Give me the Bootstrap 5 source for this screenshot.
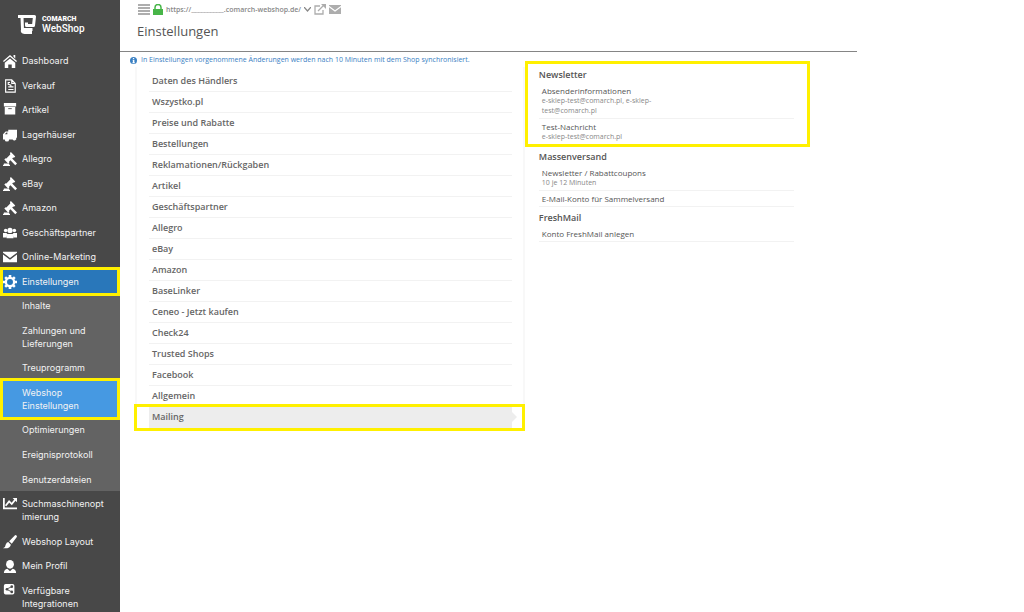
<!DOCTYPE html>
<html lang="de">
<head>
<meta charset="utf-8">
<meta name="viewport" content="width=device-width, initial-scale=1">
<title>Einstellungen – Comarch WebShop</title>
<link href="https://cdn.jsdelivr.net/npm/bootstrap@5.3.0/dist/css/bootstrap.min.css" rel="stylesheet">
<style>
body{font-family:"Open Sans","Noto Sans",sans-serif;font-size:9px;line-height:13px;color:#555;background:#fff}
a{color:inherit;text-decoration:none}
.side{width:120px;background:#484848;color:#f2f2f2;font-family:Inter,"Open Sans",sans-serif}
.brand{height:48px;padding:15px 0 0 18px;gap:5px}
.brand-name{font-family:Roboto,sans-serif;font-weight:500;font-size:10px;line-height:10px;color:#fff}
.brand-name b{display:block;font-size:7px;line-height:9px;font-weight:900}
.entry{position:relative;flex:1 0 auto;padding:6px 12px 5px 22px}
.entry svg{position:absolute;left:3px;top:6px;width:14px;height:14px;fill:#fff}
.entry:last-child.tail{padding-bottom:2px}
.sub{flex:7 0 auto;background:#636363}
.on{background:#2977ba}
.on-sub{background:#4699e2}
.mark-box::after{content:"";position:absolute;inset:-2px 0 -3px;border:3px solid #fff000;z-index:2;pointer-events:none}
.tools{height:18px;padding-left:18px;gap:3px;font-size:7px;font-weight:600;color:#888}
.tools button{padding:0;border:0;background:none;color:#adadad;display:flex}
.tools svg,.info svg{fill:currentColor}
.pagehead{border-bottom:1px solid #858585;width:81.5%}
h1{font-size:13px;line-height:20px;font-weight:400;color:#555;margin:3px 0 10px 17px}
.info{font-size:7px;line-height:14px;color:#3a80c3;padding:1px 0 0 10px;gap:4px}
.panels{display:grid;grid-template-columns:390fr 285fr;width:76.3%;padding-left:15px}
.cats{border-left:2px solid #f8f8f8;border-right:2px solid #f8f8f8;padding:4px 11px 3px 12px}
.cat{display:block;position:relative;height:21px;line-height:20px;padding-left:3px;border-bottom:1px solid #f2f2f2;font-weight:600;color:#666}
.cat.active{background:#ededed;border-color:#ededed}
.cat.active::before{content:"";position:absolute;left:100%;top:5px;border:5px solid transparent;border-left-color:#ededed;border-right:0}
.cat.active::after{content:"";position:absolute;inset:-3px -13px -4px -15px;border:3px solid #fff000}
.group{padding:3px 16px 0 14px}
.group h2{font-size:9px;line-height:13px;font-weight:600;color:#555;margin:0 0 2px}
.news{position:relative;margin-top:-6px;padding-top:7px;padding-bottom:3px}
.news::after{content:"";position:absolute;inset:0;border:3px solid #fff000;pointer-events:none}
.opt{display:block;font-size:8px;line-height:11px;padding:2px 3px;border-bottom:1px solid #f2f2f2}
.opt small{display:block;font-size:7px;line-height:10px;color:#888;max-width:128px}
</style>
</head>
<body>
<svg class="d-none">
<symbol id="hammer" viewBox="0 0 16 16"><path d="M9 0l5 5-1.500 1.500-.8-.3-1.200 1.200 5.500 5.600-2 2-5.500-5.600-1.500 1.500.3.900L6 13.300 1.500 8.500 3 7l.8.300 4.500-4.500L8 1z"/><path d="M1 13h6v1.500h1V16H0v-1.500h1z"/></symbol>
<symbol id="mail" viewBox="0 0 16 14"><path d="M0 1h16v1L8 8 0 2zM0 4l8 6 8-6v9H0z"/></symbol>
</svg>
<div class="d-flex min-vh-100">
<aside class="side d-flex flex-column flex-shrink-0">
<div class="brand d-flex align-items-start">
<svg width="19" height="20" viewBox="0 0 19 20" fill="none" stroke="#fff" stroke-width="3" stroke-linejoin="round"><path d="M0 1.500H16.500L15.500 10.500H8.500V7.500M4 2L4.500 14.500M14.500 14.500H4.500Q3.500 17.500 6.500 17.500H14"/></svg>
<div class="brand-name"><b>COMARCH</b>WebShop</div>
</div>
<nav class="d-flex flex-column flex-grow-1">
<a class="entry" href="#"><svg viewBox="0 0 16 16"><path d="M8 1l8 7-1 1-7-6-7 6-1-1zM12 1h2v4l-2-2zM8 5l6 5v6h-4v-4H6v4H2v-6z"/></svg>Dashboard</a>
<a class="entry" href="#"><svg viewBox="0 0 16 16"><path fill="none" stroke="#fff" stroke-width="1.300" d="M3 1h7l4 4v10H3zM10 1v4h4M6 12h6M9 9h3M8 4H6v2l3 1v2H6"/></svg>Verkauf</a>
<a class="entry" href="#"><svg viewBox="0 0 16 16"><path d="M1 0h14v4H1zM2 4.500h12V13H2z"/><path fill="#484848" d="M6 6h4v1H6z"/></svg>Artikel</a>
<a class="entry" href="#"><svg viewBox="0 0 16 16"><path d="M6 2h10v9h-1a2.200 2.200 0 0 1-4 2H7a2.200 2.200 0 0 1-5 0H0V7l3-3h3zM2 7h3V5H4z" fill-rule="evenodd"/></svg>Lagerhäuser</a>
<a class="entry" href="#"><svg><use href="#hammer"/></svg>Allegro</a>
<a class="entry" href="#"><svg><use href="#hammer"/></svg>eBay</a>
<a class="entry" href="#"><svg><use href="#hammer"/></svg>Amazon</a>
<a class="entry" href="#"><svg viewBox="0 0 16 16"><circle cx="3" cy="5" r="2"/><circle cx="13" cy="5" r="2"/><circle cx="8" cy="5" r="3"/><path d="M0 8h4l1 1-1 4H0zM12 8h4v5h-4l-1-4zM5 9h6l1 5H4z"/></svg>Geschäftspartner</a>
<a class="entry" href="#"><svg><use href="#mail"/></svg>Online-Marketing</a>
<a class="entry on mark-box" href="#"><svg viewBox="0 0 16 16"><circle cx="8" cy="8" r="4.700" fill="none" stroke="#fff" stroke-width="2.600"/><path d="M6.500 0h3v3h-3zM6.500 13h3v3h-3zM0 6.500h3v3H0zM13 6.500h3v3h-3zM1.500 3.500l2-2 2 2-2 2zM10.500 3.500l2-2 2 2-2 2zM1.500 12.500l2-2 2 2-2 2zM10.500 12.500l2-2 2 2-2 2z"/></svg>Einstellungen</a>
<div class="sub d-flex flex-column">
<a class="entry" href="#">Inhalte</a>
<a class="entry" href="#">Zahlungen und<br>Lieferungen</a>
<a class="entry" href="#">Treuprogramm</a>
<a class="entry on-sub mark-box" href="#">Webshop<br>Einstellungen</a>
<a class="entry" href="#">Optimierungen</a>
<a class="entry" href="#">Ereignisprotokoll</a>
<a class="entry" href="#">Benutzerdateien</a>
</div>
<a class="entry" href="#"><svg viewBox="0 0 16 16"><path fill="none" stroke="#fff" stroke-width="2" d="M1 1v12h15M3 10l4-5 3 3 4-5"/><path d="M11 1h5v5z"/></svg>Suchmaschinenopt<br>imierung</a>
<a class="entry" href="#"><svg viewBox="0 0 16 16"><path d="M14 0q2 0 2 2l-6 8-3-3zM6 8l3 3q-1 5-9 4 3-1 3-4 1-3 3-3z"/></svg>Webshop Layout</a>
<a class="entry" href="#"><svg viewBox="0 0 16 16"><ellipse cx="8" cy="6" rx="4.500" ry="5"/><path d="M1 16q0-4 4-5l3 3 3-3q4 1 4 5z"/></svg>Mein Profil</a>
<a class="entry tail" href="#"><svg viewBox="0 0 16 16"><rect x="1" width="12" height="12" rx="2"/><path stroke="#484848" d="M10 3L4 6l6 3" fill="none"/><g fill="#484848"><circle cx="10" cy="3" r="1.500"/><circle cx="4.500" cy="6" r="1.500"/><circle cx="10" cy="9" r="1.500"/></g></svg>Verfügbare<br>Integrationen</a>
</nav>
</aside>
<main class="flex-grow-1">
<header class="pagehead">
<div class="tools d-flex align-items-center">
<button type="button" aria-label="Menü"><svg width="12" height="11" viewBox="0 0 12 11"><path d="M0 0h12v2H0zM0 3h12v2H0zM0 6h12v2H0zM0 9h12v2H0z"/></svg></button>
<svg width="10" height="11" viewBox="0 0 10 11" style="color:#47b548"><path d="M0 5h10v6H0z"/><path d="M2 5V3.500a3 3 0 0 1 6 0V5" fill="none" stroke="currentColor" stroke-width="1.500"/></svg>
<a href="#">https://___________.comarch-webshop.de/</a>
<button type="button" aria-label="Auswahl"><svg width="7" height="5"><path d="M0 0l3.500 4L7 0" fill="none" stroke="#888" stroke-width="1.300"/></svg></button>
<button type="button" aria-label="Shop öffnen"><svg width="12" height="11" viewBox="0 0 12 11"><path d="M6 2H1v8h8V6M4 7l6-6" fill="none" stroke="currentColor" stroke-width="1.300"/><path d="M7 0h5v5z"/></svg></button>
<button type="button" aria-label="Nachricht"><svg width="12" height="11"><use href="#mail"/></svg></button>
</div>
<h1>Einstellungen</h1>
</header>
<div class="info d-flex align-items-center"><svg width="7" height="7" viewBox="0 0 8 8"><circle cx="4" cy="4" r="4"/><path fill="#fff" d="M3.300 1h1.500v1.200H3.300zM3 3h2v3h.5v1H2.800V6h.5V4H3z"/></svg>In Einstellungen vorgenommene Änderungen werden nach 10 Minuten mit dem Shop synchronisiert.</div>
<div class="panels">
<nav class="cats">
<a class="cat" href="#">Daten des Händlers</a>
<a class="cat" href="#">Wszystko.pl</a>
<a class="cat" href="#">Preise und Rabatte</a>
<a class="cat" href="#">Bestellungen</a>
<a class="cat" href="#">Reklamationen/Rückgaben</a>
<a class="cat" href="#">Artikel</a>
<a class="cat" href="#">Geschäftspartner</a>
<a class="cat" href="#">Allegro</a>
<a class="cat" href="#">eBay</a>
<a class="cat" href="#">Amazon</a>
<a class="cat" href="#">BaseLinker</a>
<a class="cat" href="#">Ceneo - Jetzt kaufen</a>
<a class="cat" href="#">Check24</a>
<a class="cat" href="#">Trusted Shops</a>
<a class="cat" href="#">Facebook</a>
<a class="cat" href="#">Allgemein</a>
<a class="cat active" href="#">Mailing</a>
</nav>
<div>
<section class="group news">
<h2>Newsletter</h2>
<a class="opt" href="#">Absenderinformationen<small>e-sklep-test@comarch.pl, e-sklep-test@comarch.pl</small></a>
<a class="opt border-0" href="#">Test-Nachricht<small>e-sklep-test@comarch.pl</small></a>
</section>
<section class="group">
<h2>Massenversand</h2>
<a class="opt" href="#">Newsletter / Rabattcoupons<small>10 je 12 Minuten</small></a>
<a class="opt" href="#">E-Mail-Konto für Sammelversand</a>
</section>
<section class="group pt-1">
<h2>FreshMail</h2>
<a class="opt" href="#">Konto FreshMail anlegen</a>
</section>
</div>
</div>
</main>
</div>
<script src="https://cdn.jsdelivr.net/npm/bootstrap@5.3.0/dist/js/bootstrap.bundle.min.js"></script>
</body>
</html>
